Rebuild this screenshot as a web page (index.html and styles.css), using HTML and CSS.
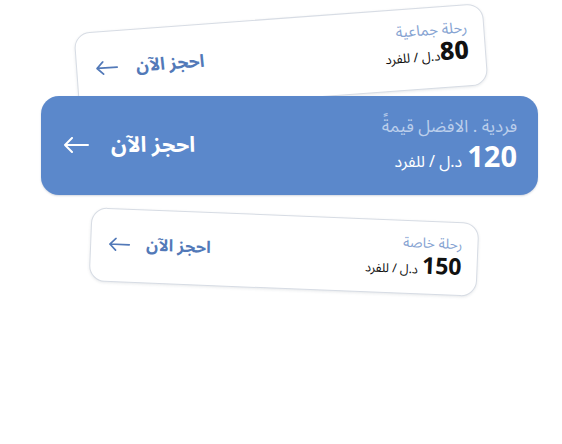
FILE: index.html
```html
<!DOCTYPE html>
<html lang="ar" dir="rtl">
<head>
<meta charset="utf-8">
<link rel="stylesheet" href="styles.css">
</head>
<body>
<div class="stack">
  <div class="card card-group">
    <div class="info">
      <div class="title">رحلة جماعية</div>
      <div class="price"><span class="amount">80</span><span class="unit">د.ل / للفرد</span></div>
    </div>
    <div class="cta">
      <span class="cta-text">احجز الآن</span>
      <svg class="arrow" viewBox="0 0 26 16" width="23" height="14"><path d="M25 8H2M9 1L2 8l7 7" fill="none" stroke="currentColor" stroke-width="2" stroke-linecap="round" stroke-linejoin="round"/></svg>
    </div>
  </div>
  <div class="card card-main">
    <div class="info">
      <div class="title">فردية . الافضل قيمةً</div>
      <div class="price"><span class="amount">120</span><span class="unit">د.ل / للفرد</span></div>
    </div>
    <div class="cta">
      <span class="cta-text">احجز الآن</span>
      <svg class="arrow" viewBox="0 0 26 16" width="26" height="16"><path d="M25 8H2M9 1L2 8l7 7" fill="none" stroke="currentColor" stroke-width="2" stroke-linecap="round" stroke-linejoin="round"/></svg>
    </div>
  </div>
  <div class="card card-private">
    <div class="info">
      <div class="title">رحلة خاصة</div>
      <div class="price"><span class="amount">150</span><span class="unit">د.ل / للفرد</span></div>
    </div>
    <div class="cta">
      <span class="cta-text">احجز الآن</span>
      <svg class="arrow" viewBox="0 0 26 16" width="22" height="14"><path d="M25 8H2M9 1L2 8l7 7" fill="none" stroke="currentColor" stroke-width="2" stroke-linecap="round" stroke-linejoin="round"/></svg>
    </div>
  </div>
</div>
</body>
</html>
```

FILE: styles.css
```css
html, body {
  margin: 0;
  padding: 0;
  background: #ffffff;
  width: 562px;
  height: 444px;
  overflow: hidden;
}

body {
  font-family: "Noto Sans Arabic", "Noto Sans", "DejaVu Sans", sans-serif;
}

.stack {
  display: flex;
  flex-direction: column;
  align-items: center;
  direction: ltr;
}

.card {
  direction: rtl;
  display: flex;
  align-items: center;
  justify-content: space-between;
  box-sizing: border-box;
  background: #ffffff;
  border: 1px solid #d7dce4;
  border-radius: 16px;
  box-shadow: 0 1px 3px rgba(60, 70, 90, 0.12);
}

.info {
  display: flex;
  flex-direction: column;
  align-items: flex-start;
  gap: 2px;
}

.title {
  color: #86a3d2;
  line-height: 1.15;
}

.price {
  display: flex;
  align-items: baseline;
  gap: 4px;
  line-height: 1;
}

.amount {
  font-weight: 700;
  color: #111111;
}

.unit {
  color: #111111;
}

.cta {
  display: flex;
  align-items: center;
  color: #5279b8;
  font-weight: 700;
  line-height: 1.2;
}

.arrow {
  display: block;
}

/* top card */
.card-group {
  width: 410px;
  height: 82px;
  margin-top: 18px;
  padding: 0 16px 8px 18px;
  transform: rotate(-4.2deg);
  position: relative;
  z-index: 1;
}
.card-group .title { font-size: 15px; }
.card-group .amount { font-size: 25px; font-weight: 800; }
.card-group .unit { font-size: 13px; }
.card-group .price { gap: 0; }
.card-group .cta { gap: 18px; font-size: 17.5px; }

/* main card */
.card-main {
  width: 497px;
  height: 99px;
  margin-top: -4px;
  margin-left: 17px;
  padding: 0 21px 0 22px;
  background: #5b88cb;
  border: none;
  border-radius: 18px;
  box-shadow: 0 1px 2px rgba(40, 60, 100, 0.2);
  position: relative;
  z-index: 2;
}
.card-main .info { gap: 7px; }
.card-main .title { font-size: 17px; line-height: 1.05; color: #bccfeb; }
.card-main .amount { font-size: 29px; color: #ffffff; }
.card-main .unit { font-size: 16px; color: #ffffff; }
.card-main .price { gap: 5px; }
.card-main .cta { gap: 22px; font-size: 21.5px; color: #ffffff; }

/* bottom card */
.card-private {
  width: 388px;
  height: 74px;
  margin-top: 20px;
  margin-left: 5px;
  padding: 0 15px 2px 17px;
  transform: rotate(2.3deg);
}
.card-private .title { font-size: 14px; }
.card-private .amount { font-size: 23px; }
.card-private .unit { font-size: 12.5px; }
.card-private .cta { gap: 16px; font-size: 16.5px; }
```
